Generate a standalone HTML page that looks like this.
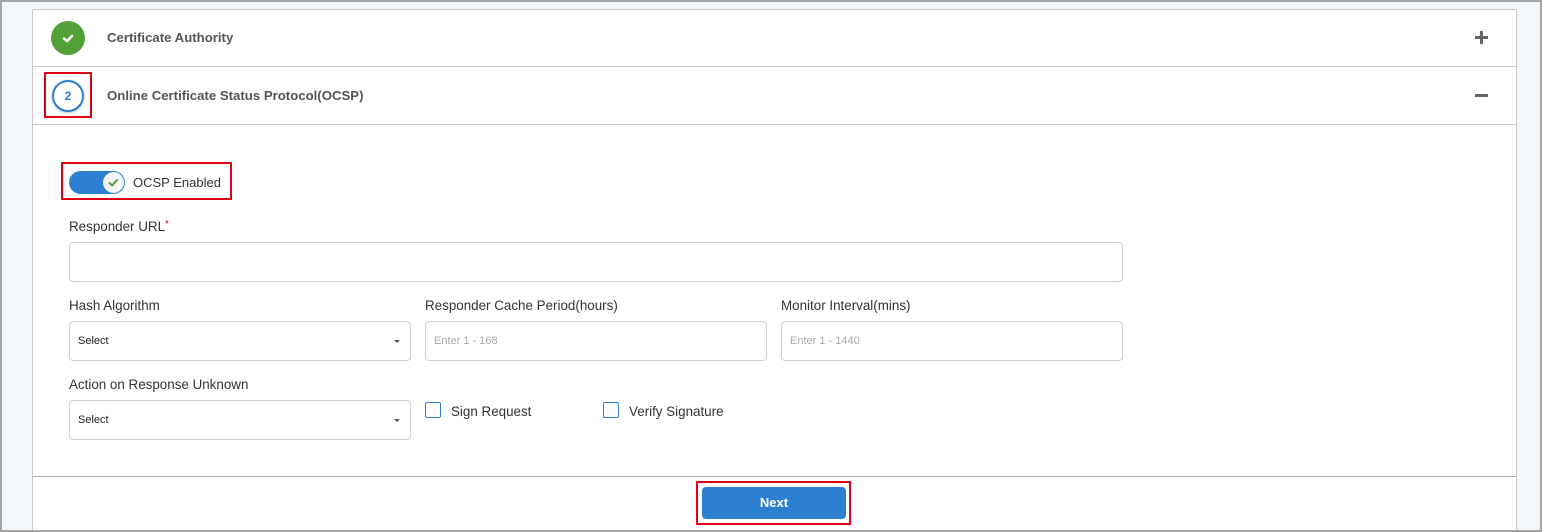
<!DOCTYPE html>
<html><head><meta charset="utf-8"><style>
*{box-sizing:border-box;margin:0;padding:0}
html,body{width:1542px;height:532px}
body{background:#f3f6fb;font-family:"Liberation Sans",sans-serif;color:#333;overflow:hidden}
.a{position:absolute}
.frame{left:0;top:0;width:1542px;height:532px;border:2px solid #a6a6a6}
.card{left:32px;top:9px;width:1485px;height:521px;background:#fff;border:1px solid #c8c8c8;border-bottom:none}
.hl{height:1px;background:#c8c8c8;left:33px;width:1483px}
.title{font-size:13.2px;font-weight:bold;color:#555}
.lbl{font-size:13.4px;color:#333}
.inp{border:1px solid #d0d0d0;border-radius:4px;height:40px;background:#fff}
.ph{font-size:11px;color:#aaa}
.sel{font-size:11px;color:#222}
.red{border:2px solid #e00016}
.cb{width:16px;height:16px;border:1.5px solid #2d7fd0;border-radius:2px}
</style></head><body>
<div class="a card"></div>
<div class="a frame"></div>
<div class="a hl" style="top:66px"></div>
<div class="a hl" style="top:124px"></div>
<div class="a hl" style="top:476px;background:#aaa"></div>

<div class="a" style="left:51px;top:21px;width:34px;height:34px;border-radius:50%;background:#52a038"></div>
<svg class="a" style="left:59px;top:29px" width="18" height="18" viewBox="0 0 18 18"><path d="M5 9.5l3 2.8 5-5.5" stroke="#fff" stroke-width="2.4" fill="none" stroke-linecap="round" stroke-linejoin="round"/></svg>
<div class="a title" style="left:107px;top:30px">Certificate Authority</div>
<div class="a" style="left:1475px;top:36px;width:13px;height:3px;background:#666"></div>
<div class="a" style="left:1480px;top:31px;width:3px;height:13px;background:#666"></div>

<div class="a red" style="left:44px;top:72px;width:48px;height:46px"></div>
<div class="a" style="left:52px;top:80px;width:32px;height:32px;border-radius:50%;border:2px solid #2d7fd0;box-shadow:0 1px 3px rgba(0,0,0,.25);text-align:center;line-height:28px;font-size:12px;font-weight:bold;color:#2d7fd0">2</div>
<div class="a title" style="left:107px;top:88px">Online Certificate Status Protocol(OCSP)</div>
<div class="a" style="left:1475px;top:94px;width:13px;height:3px;background:#666"></div>

<div class="a red" style="left:61px;top:162px;width:171px;height:38px"></div>
<div class="a" style="left:69px;top:171px;width:56px;height:23px;border-radius:12px;background:#2d7fd0"></div>
<div class="a" style="left:103px;top:172px;width:21px;height:21px;border-radius:50%;background:#f4f4f4"></div>
<svg class="a" style="left:106px;top:175px" width="15" height="15" viewBox="0 0 15 15"><path d="M3.5 8l2.6 2.4 5-5.4" stroke="#52a038" stroke-width="2" fill="none" stroke-linecap="round" stroke-linejoin="round"/></svg>
<div class="a lbl" style="left:133px;top:175px;font-size:13px">OCSP Enabled</div>

<div class="a lbl" style="left:69px;top:219px">Responder URL<span style="color:#d0021b;font-size:10px;vertical-align:top">*</span></div>
<div class="a inp" style="left:69px;top:242px;width:1054px"></div>

<div class="a lbl" style="left:69px;top:298px">Hash Algorithm</div>
<div class="a inp" style="left:69px;top:321px;width:342px"></div>
<div class="a sel" style="left:78px;top:335px">Select</div>
<div class="a" style="left:394px;top:340px;border:3px solid transparent;border-top:3px solid #555"></div>

<div class="a lbl" style="left:425px;top:298px">Responder Cache Period(hours)</div>
<div class="a inp" style="left:425px;top:321px;width:342px"></div>
<div class="a ph" style="left:434px;top:335px">Enter 1 - 168</div>

<div class="a lbl" style="left:781px;top:298px">Monitor Interval(mins)</div>
<div class="a inp" style="left:781px;top:321px;width:342px"></div>
<div class="a ph" style="left:790px;top:335px">Enter 1 - 1440</div>

<div class="a lbl" style="left:69px;top:377px">Action on Response Unknown</div>
<div class="a inp" style="left:69px;top:400px;width:342px"></div>
<div class="a sel" style="left:78px;top:414px">Select</div>
<div class="a" style="left:394px;top:419px;border:3px solid transparent;border-top:3px solid #555"></div>

<div class="a cb" style="left:425px;top:402px"></div>
<div class="a lbl" style="left:451px;top:404px">Sign Request</div>
<div class="a cb" style="left:603px;top:402px"></div>
<div class="a lbl" style="left:629px;top:404px">Verify Signature</div>

<div class="a red" style="left:696px;top:481px;width:155px;height:44px"></div>
<div class="a" style="left:702px;top:487px;width:144px;height:32px;border-radius:4px;background:#2d7fd0;color:#fff;font-weight:bold;font-size:13px;text-align:center;line-height:32px">Next</div>
</body></html>
